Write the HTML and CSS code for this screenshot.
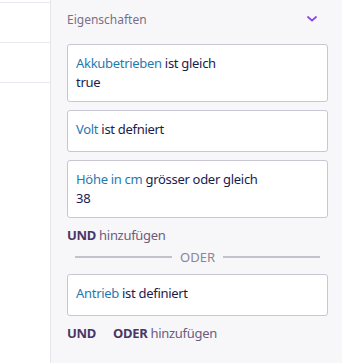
FILE: index.html
```html
<!DOCTYPE html>
<html lang="de">
<head>
<meta charset="utf-8">
<link rel="stylesheet" href="styles.css">
</head>
<body>
<div class="layout">
  <aside class="sidebar">
    <div class="side-row side-row-first"></div>
    <div class="side-row"></div>
    <div class="side-row"></div>
  </aside>
  <main class="panel">
    <div class="panel-head">
      <span class="panel-title">Eigenschaften</span>
      <svg class="chevron" width="10" height="6" viewBox="0 0 10 6"><path d="M1 1 L5 4.6 L9 1" fill="none" stroke="#8c46e6" stroke-width="1.8" stroke-linecap="round" stroke-linejoin="round"/></svg>
    </div>
    <div class="card"><span class="prop">Akkubetrieben</span> ist gleich<br>true</div>
    <div class="card"><span class="prop">Volt</span> ist defniert</div>
    <div class="card"><span class="prop">Höhe in cm</span> grösser oder gleich<br>38</div>
    <div class="actions"><span class="op">UND</span> hinzufügen</div>
    <div class="divider"><span class="line"></span><span class="divider-text">ODER</span><span class="line"></span></div>
    <div class="card"><span class="prop">Antrieb</span> ist definiert</div>
    <div class="actions actions-last"><span class="op">UND</span><span class="op">ODER</span> hinzufügen</div>
  </main>
</div>
</body>
</html>
```
FILE: styles.css
```css
* { box-sizing: border-box; }
html, body { margin: 0; padding: 0; }
body {
  font-family: "Noto Sans", "Open Sans", sans-serif;
  font-size: 13px;
  letter-spacing: -0.3px;
  color: #1b1b4d;
  background: #f7f7fa;
}
.layout {
  display: flex;
  width: 342px;
  height: 363px;
  overflow: hidden;
}
.sidebar {
  width: 51px;
  flex: none;
  background: #ffffff;
  border-right: 1px solid #e5e5ee;
}
.side-row {
  height: 40px;
  border-bottom: 1px solid #e8e8ee;
}
.side-row-first { height: 3px; }
.panel {
  flex: 1;
  padding: 10px 14px 0 16px;
  display: flex;
  flex-direction: column;
}
.panel-head {
  display: flex;
  align-items: center;
  justify-content: space-between;
  height: 18px;
  margin-bottom: 16px;
}
.panel-title {
  font-size: 12px;
  letter-spacing: 0;
  color: #7a6e86;
}
.chevron { margin-right: 11px; }
.card {
  background: #ffffff;
  border: 1px solid #c9c5d2;
  border-radius: 3px;
  padding: 9px 8px 9px 8px;
  line-height: 19px;
  min-height: 42px;
  margin-bottom: 8px;
}
.prop { color: #1f7ab0; }
.actions {
  color: #6d5c7c;
  line-height: 19px;
}
.op {
  font-weight: 700;
  color: #4a3766;
}
.actions-last .op { margin-right: 17px; }
.actions-last .op + .op { margin-right: 0; }
.divider {
  display: flex;
  align-items: center;
  gap: 8px;
  margin: 2px 8px 8px 8px;
  height: 19px;
}
.line {
  flex: 1;
  height: 2px;
  background: #c5c1cc;
}
.divider-text {
  color: #8a8597;
  font-size: 13px;
  letter-spacing: 0;
}
```
